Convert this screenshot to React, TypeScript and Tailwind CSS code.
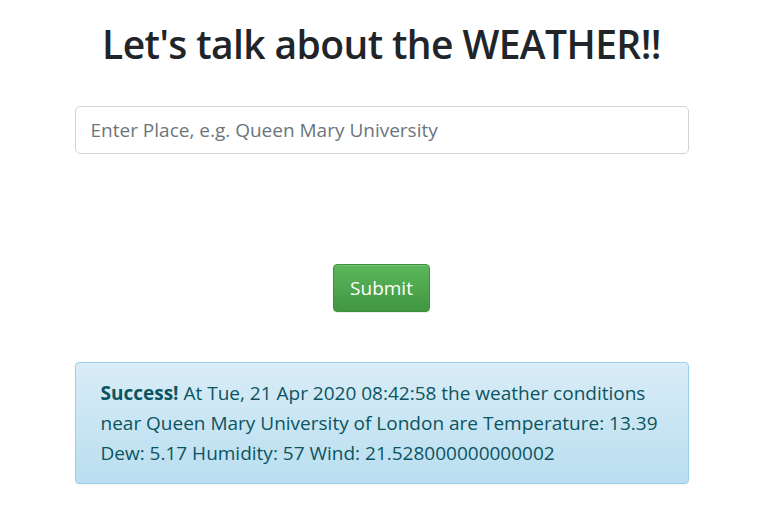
import { useState } from 'react'

export default function App() {
  const [place, setPlace] = useState('')

  return (
    <div className="min-h-svh bg-white font-['Open_Sans',sans-serif] text-[#212529]">
      <div className="mx-auto flex w-[614px] flex-col pt-[20px]">
        <h1 className="text-center text-[39px] font-semibold leading-[48px] tracking-[-0.6px]">
          Let's talk about the WEATHER!!
        </h1>

        <input
          value={place}
          onChange={(e) => setPlace(e.target.value)}
          placeholder="Enter Place, e.g. Queen Mary University"
          className="mt-[38px] h-[48px] w-full rounded-[5px] border border-[#ced4da] px-[15px] text-[19px] text-[#495057] outline-none placeholder:text-[#6c757d]"
        />

        <div className="mt-[110px] flex justify-center">
          <button className="h-[48px] rounded-[4px] border border-[#3e8f3e] bg-gradient-to-b from-[#5cb85c] to-[#419641] px-4 text-[19px] text-white shadow-[inset_0_1px_0_rgba(255,255,255,0.15),0_1px_1px_rgba(0,0,0,0.075)]">
            Submit
          </button>
        </div>

        <div className="mt-[50px] rounded-[4px] border border-[#9acfea] bg-gradient-to-b from-[#d9edf7] to-[#b9def0] py-[15px] pl-[25px] pr-[20px] text-[19px] leading-[30px] text-[#0c5460] shadow-[inset_0_1px_0_rgba(255,255,255,0.25),0_1px_2px_rgba(0,0,0,0.05)]">
          <strong className="font-bold">Success!</strong> At Tue, 21 Apr 2020 08:42:58 the weather conditions
          near Queen Mary University of London are Temperature: 13.39 Dew: 5.17 Humidity: 57 Wind:
          21.528000000000002
        </div>
      </div>
    </div>
  )
}
